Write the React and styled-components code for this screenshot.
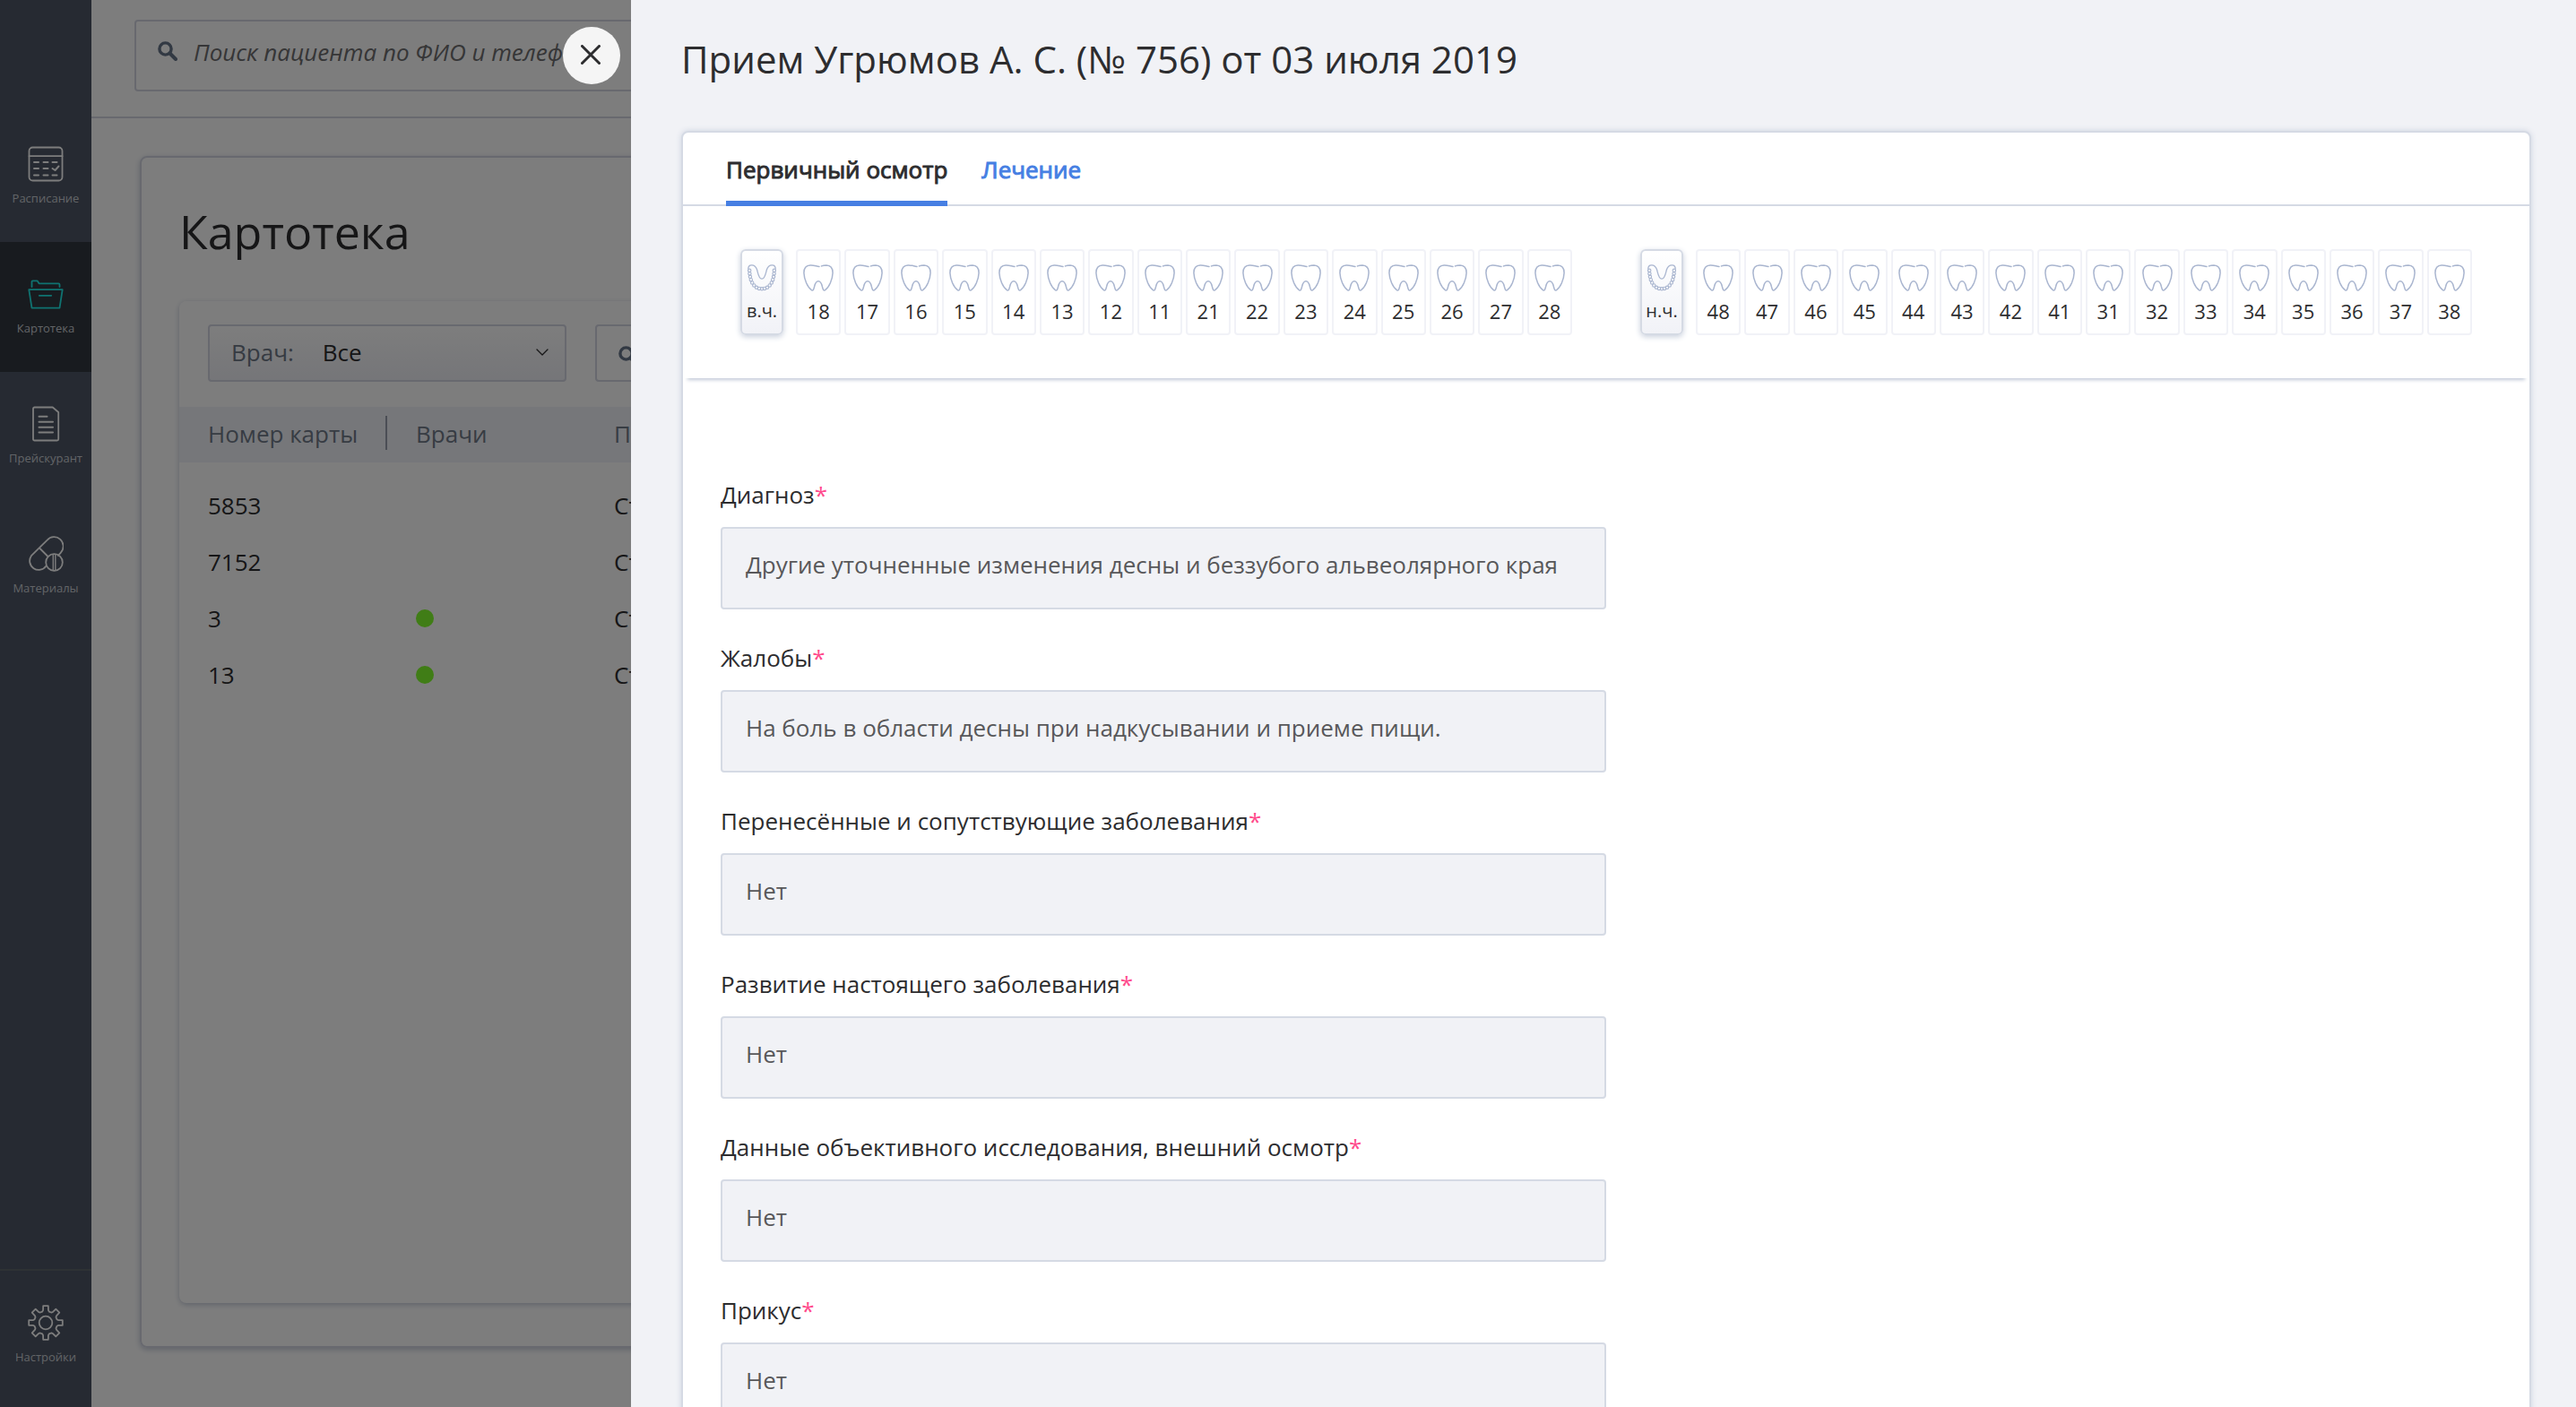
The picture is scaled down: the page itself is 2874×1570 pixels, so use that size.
import React from "react";
import styled, { createGlobalStyle, css } from "styled-components";

const GlobalStyle = createGlobalStyle`
  *, *::before, *::after { box-sizing: border-box; }
  body {
    margin: 0;
    height: 100vh;
    overflow: hidden;
    background: #fff;
    color: #2d2d2f;
    font-family: "Open Sans", "Noto Sans", sans-serif;
    font-size: 26px;
    font-weight: 380;
    line-height: 36px;
  }
  button, input, select, textarea { font: inherit; color: inherit; margin: 0; }
  h1, h2 { margin: 0; font-weight: inherit; }
`;

/* ---------- page behind the drawer ---------- */

const Page = styled.div`
  display: flex;
  height: 100vh;
`;

const Sidebar = styled.nav`
  display: flex;
  flex-direction: column;
  width: 102px;
  flex: none;
  padding-top: 125px;
  background: #4e5666;
`;

const NavItem = styled.a`
  display: flex;
  flex-direction: column;
  align-items: center;
  height: 145px;
  padding-top: 38px;
  color: #fff;
  text-decoration: none;
  background: ${(p) => (p.$active ? "#31373f" : "transparent")};

  svg { color: ${(p) => (p.$active ? "#1feae6" : "#fff")}; }
`;

const SettingsItem = styled(NavItem)`
  height: 154px;
  margin-top: auto;
  border-top: 2px solid #5e666b;
`;

const NavLabel = styled.span`
  margin-top: 8px;
  font-size: 13px;
  line-height: 20px;
  color: #c8ccd2;
`;

const Main = styled.main`
  flex: 1;
  min-width: 0;
  display: flex;
  flex-direction: column;
`;

const TopBar = styled.header`
  padding: 22px 48px 28px;
  border-bottom: 2px solid #d4d6e2;
`;

const SearchBox = styled.label`
  display: flex;
  align-items: center;
  height: ${(p) => (p.$compact ? "64px" : "80px")};
  flex: 1;
  padding: 0 24px;
  gap: 18px;
  border: 2px solid #d4d6e2;
  border-radius: 4px;
  color: #66758a;

  svg { flex: none; margin: ${(p) => (p.$compact ? "6px 0 0" : "0 0 10px")}; }
  input {
    flex: 1;
    min-width: 0;
    height: 36px;
    margin-bottom: 8px;
    padding: 0;
    border: 0;
    outline: 0;
    background: transparent;
    font-style: italic;
  }
  input::placeholder { color: #6e6e70; opacity: 1; }
`;

const Card = styled.section`
  flex: 1;
  display: flex;
  flex-direction: column;
  margin: 42px 48px 66px 54px;
  padding: 46px 42px 48px;
  border: 2px solid #d4d7e2;
  border-radius: 8px;
  box-shadow: 0 2px 6px #c4cad8;
`;

const CardTitle = styled.h1`
  font-size: 52px;
  line-height: 72px;
`;

const Registry = styled.div`
  flex: 1;
  margin-top: 42px;
  border-radius: 8px;
  box-shadow: 0 2px 6px #c4cad8;
`;

const Filters = styled.div`
  display: flex;
  gap: 32px;
  padding: 26px 32px 28px;
`;

const DoctorFilter = styled.div`
  display: flex;
  align-items: center;
  width: 400px;
  height: 64px;
  padding: 0 18px 2px 24px;
  border: 2px solid #d4d6e2;
  border-radius: 4px;
  background: linear-gradient(#fff, #eff0f6);

  label { color: #6f7887; margin-right: 32px; }
  select {
    flex: 1;
    padding: 0;
    border: 0;
    outline: 0;
    background: transparent;
    appearance: none;
  }
`;

const Table = styled.table`
  width: 100%;
  table-layout: fixed;
  border-collapse: collapse;
  text-align: left;

  th, td { padding: 0 0 2px 32px; white-space: nowrap; font-weight: inherit; }
  th { height: 62px; background-color: #f0f3f8; color: #707a8a; }
  th:first-child {
    background-image: linear-gradient(#9aa0ae, #9aa0ae);
    background-repeat: no-repeat;
    background-position: right 10px;
    background-size: 2px 38px;
  }
  td { height: 63px; }
  tbody::before { content: ""; display: block; height: 17px; }
`;

const Col = styled.col`
  width: ${(p) => p.$width};
`;

const Dot = styled.span`
  display: block;
  width: 20px;
  height: 20px;
  border-radius: 50%;
  background: #84ff2e;
`;

/* ---------- drawer ---------- */

const Backdrop = styled.div`
  position: fixed;
  inset: 0;
  display: flex;
  background: rgba(0, 0, 0, 0.51);
`;

const CloseSlot = styled.div`
  flex: none;
  width: 704px;
  display: flex;
  justify-content: flex-end;
  align-items: flex-start;
  padding: 30px 12px;
`;

const CloseButton = styled.button`
  display: flex;
  align-items: center;
  justify-content: center;
  width: 64px;
  height: 64px;
  padding: 0;
  border: 0;
  border-radius: 50%;
  background: #f5f5f5;
`;

const Drawer = styled.aside`
  flex: 1;
  min-width: 0;
  overflow: hidden;
  padding: 38px 50px 0 56px;
  background: #f1f2f6;
`;

const DrawerTitle = styled.h2`
  font-size: 42px;
  line-height: 56px;
`;

const Visit = styled.section`
  margin-top: 52px;
  border: 2px solid #d5dae4;
  border-radius: 8px;
  background: #fff;
  box-shadow: 0 0 6px #ccd3e0;
`;

const Tabs = styled.div`
  display: flex;
  gap: 38px;
  padding: 0 48px;
  border-bottom: 2px solid #d5dae4;
`;

const Tab = styled.button`
  margin-bottom: -2px;
  padding: 23px 0 17px;
  border: 0;
  border-bottom: 6px solid transparent;
  background: none;
  -webkit-text-stroke: 1px currentColor;
  color: #467fe3;
  ${(p) =>
    p.$active &&
    css`
      color: #2d2d2f;
      border-color: #467fe3;
    `}
`;

const Jaws = styled.div`
  display: grid;
  grid-template-columns: 1fr 1fr;
  gap: 76px;
  margin: 0 2px;
  padding: 48px 62px;
  box-shadow: 0 5px 4px -3px #c3cad8;
`;

const Jaw = styled.div`
  display: flex;
  gap: 14px;
`;

const Teeth = styled.div`
  flex: 1;
  display: grid;
  grid-template-columns: repeat(16, 1fr);
  gap: 4px;
`;

const toothCell = css`
  display: flex;
  flex-direction: column;
  align-items: center;
  gap: 6px;
  min-width: 0;
  height: 96px;
  padding: 15px 0 0;
  line-height: 32px;

  svg { flex: none; color: #a9b5cf; }
`;

const ToothButton = styled.button`
  ${toothCell}
  font-size: 22px;
  border: 2px solid #f1f2f7;
  border-radius: 4px;
  background: #fff;
`;

const JawButton = styled.button`
  ${toothCell}
  width: 48px;
  font-size: 20px;
  border: 2px solid #d5dae4;
  border-radius: 6px;
  background: linear-gradient(#fff, #f1f2f7);
  box-shadow: 0 2px 6px #c9d0dd;
`;

const Form = styled.form`
  display: flex;
  flex-direction: column;
  gap: 36px;
  padding: 112px 42px 48px;
`;

const Field = styled.div`
  display: flex;
  flex-direction: column;
  gap: 18px;
  width: 50%;
`;

const Required = styled.span`
  color: #ff4b8c;
`;

const Answer = styled.textarea`
  display: block;
  width: 100%;
  height: 92px;
  padding: 22px 26px;
  border: 2px solid #d5dae4;
  border-radius: 4px;
  outline: 0;
  resize: none;
  overflow: hidden;
  background: #f1f2f6;
  color: #58585a;
`;

/* ---------- drawings ---------- */

const stroke = {
  fill: "none",
  stroke: "currentColor",
  strokeLinecap: "round",
  strokeLinejoin: "round",
};

const ScheduleIcon = () => (
  <svg width="40" height="40" viewBox="0 0 40 40" {...stroke} strokeWidth="1.8">
    <rect x="1.5" y="1.5" width="37" height="37" rx="4" />
    <path d="M1.5 11.2h37" />
    <path d="M7 18h5M17.500 18h5M27.500 18h5M7 25h5M17.500 25h5M7 32.500h5M17.500 32.500h5M27.500 32.500h5" strokeWidth="2" />
    <path d="M27.500 25l3 2 4-4.500" strokeWidth="2" />
  </svg>
);

const FolderIcon = () => (
  <svg width="40" height="40" viewBox="0 0 40 40" {...stroke} strokeWidth="1.8">
    <path d="M4.500 12V6.300c0-.7.400-1 1-1h4.600c.5 0 .8.200 1 .7L12.500 8.300h21.700c.8 0 1.300.5 1.300 1.200V12" />
    <path d="M1.300 15.200h37.400L35.500 35.600H4.500z" />
    <path d="M12.800 21.800h13.400" />
  </svg>
);

const PriceIcon = () => (
  <svg width="40" height="40" viewBox="0 0 40 40" {...stroke} strokeWidth="1.8">
    <path d="M7.500 1.500h20.300L34.200 7v30a1.500 1.500 0 0 1-1.500 1.500H7.500A1.500 1.500 0 0 1 6 37V3a1.500 1.500 0 0 1 1.500-1.500z" />
    <path d="M12.500 11.800h9M12.500 17.800h15.500M12.500 23.800h15.500M12.500 29.600h15.500" strokeWidth="2" />
  </svg>
);

const PillsIcon = () => (
  <svg width="40" height="40" viewBox="0 0 40 40" {...stroke} strokeWidth="1.8">
    <path d="M20.500 33.500a10 10 0 0 1-16.600-11.300L21.700 4.600A10 10 0 0 1 37 18.400c-.6.900-1.900 2.200-3.200 3.400" />
    <path d="M13.500 14l9 9" />
    <circle cx="29.500" cy="29.500" r="9.300" />
    <path d="M28.300 20.500v18M30.800 20.500v18" strokeWidth="1.400" />
  </svg>
);

const gearPath = Array.from({ length: 8 }, (_, i) => {
  const at = (deg, r) => {
    const a = ((i * 45 + deg - 90) * Math.PI) / 180;
    return `${(20 + r * Math.cos(a)).toFixed(2)} ${(20 + r * Math.sin(a)).toFixed(2)}`;
  };
  return `${i ? "L" : "M"}${at(-17, 13)}L${at(-12, 14.2)}L${at(-8.5, 19)}L${at(8.5, 19)}L${at(12, 14.2)}L${at(17, 13)}`;
}).join("") + "Z";

const GearIcon = () => (
  <svg width="40" height="40" viewBox="0 0 40 40" {...stroke} strokeWidth="1.8">
    <path d={gearPath} />
    <circle cx="20" cy="20" r="7.300" />
  </svg>
);

const SearchIcon = () => (
  <svg width="22" height="22" viewBox="0 0 22 22" {...stroke} strokeWidth="3.400">
    <circle cx="8.500" cy="8.500" r="6.600" />
    <path d="M13.500 13.500l6.500 6.500" strokeWidth="4" />
  </svg>
);

const ChevronIcon = () => (
  <svg width="14" height="10" viewBox="0 0 14 10" {...stroke} strokeWidth="1.300">
    <path d="M1 2l6 6 6-6" />
  </svg>
);

const CrossIcon = () => (
  <svg width="24" height="24" viewBox="0 0 24 24" {...stroke} strokeWidth="3">
    <path d="M1.500 1.500l19 19M20.500 1.500l-19 19" />
  </svg>
);

const ToothIcon = () => (
  <svg width="34" height="30" viewBox="0 0 34 30" {...stroke} strokeWidth="1.500">
    <path d="M18 2.400C14 1.800 12 .8 8 1 2.500 1.200.9 4.500.9 9.500 1.200 17 5 25.500 9.400 28.600c2.200 1.400 2.600-1.600 3.200-3.800.8-3.300 2-6 4.400-6s3.600 2.700 4.400 6c.6 2.200 1 5.200 3.200 3.800C29 25.500 32.800 17 33.100 9.500 33.100 4.500 31.500 1.200 26 1c-2.500 0-4 .3-5.500.9" />
  </svg>
);

const beads = [
  [2.2, 6.8], [2.4, 10.3], [2.9, 13.8], [3.8, 17.2], [5.2, 20.500], [7.300, 23.500], [10, 25.800], [13, 27],
];

const JawIcon = () => (
  <svg width="32" height="30" viewBox="0 0 32 30" {...stroke} strokeWidth="1.300">
    <path d="M.8 5C.8 1.600 2.200.9 4.500.8 8 .7 9.600 2.600 10.600 6 11.800 10.500 12.600 16.200 16 16.200s4.200-5.700 5.400-10.200C22.400 2.600 24 .7 27.500.8c2.300.1 3.700.8 3.700 4.200" />
    {beads.map(([x, y]) => (
      <g key={y} strokeWidth="1.100">
        <circle cx={x} cy={y} r="1.700" />
        <circle cx={32 - x} cy={y} r="1.700" />
      </g>
    ))}
    <circle cx="16" cy="27.300" r="1.700" strokeWidth="1.100" />
  </svg>
);

/* ---------- data ---------- */

const nav = [
  { label: "Расписание", Icon: ScheduleIcon },
  { label: "Картотека", Icon: FolderIcon, active: true },
  { label: "Прейскурант", Icon: PriceIcon },
  { label: "Материалы", Icon: PillsIcon },
];

const patients = [
  { card: "5853" },
  { card: "7152" },
  { card: "3", doctor: true },
  { card: "13", doctor: true },
];

const jaws = [
  { name: "в.ч.", teeth: [18, 17, 16, 15, 14, 13, 12, 11, 21, 22, 23, 24, 25, 26, 27, 28] },
  { name: "н.ч.", teeth: [48, 47, 46, 45, 44, 43, 42, 41, 31, 32, 33, 34, 35, 36, 37, 38] },
];

const fields = [
  ["Диагноз", "Другие уточненные изменения десны и беззубого альвеолярного края"],
  ["Жалобы", "На боль в области десны при надкусывании и приеме пищи."],
  ["Перенесённые и сопутствующие заболевания", "Нет"],
  ["Развитие настоящего заболевания", "Нет"],
  ["Данные объективного исследования, внешний осмотр", "Нет"],
  ["Прикус", "Нет"],
];

export default function App() {
  return (
    <>
      <GlobalStyle />
      <Page>
        <Sidebar>
          {nav.map(({ label, Icon, active }) => (
            <NavItem key={label} href="#" $active={active}>
              <Icon />
              <NavLabel>{label}</NavLabel>
            </NavItem>
          ))}
          <SettingsItem href="#">
            <GearIcon />
            <NavLabel>Настройки</NavLabel>
          </SettingsItem>
        </Sidebar>
        <Main>
          <TopBar>
            <SearchBox>
              <SearchIcon />
              <input type="text" placeholder="Поиск пациента по ФИО и телефону" />
            </SearchBox>
          </TopBar>
          <Card>
            <CardTitle>Картотека</CardTitle>
            <Registry>
              <Filters>
                <DoctorFilter>
                  <label htmlFor="doctor">Врач:</label>
                  <select id="doctor">
                    <option>Все</option>
                  </select>
                  <ChevronIcon />
                </DoctorFilter>
                <SearchBox $compact>
                  <SearchIcon />
                  <input type="text" />
                </SearchBox>
              </Filters>
              <Table>
                <colgroup>
                  <Col $width="232px" />
                  <Col $width="221px" />
                  <Col $width="auto" />
                </colgroup>
                <thead>
                  <tr>
                    <th>Номер карты</th>
                    <th>Врачи</th>
                    <th>П</th>
                  </tr>
                </thead>
                <tbody>
                  {patients.map(({ card, doctor }) => (
                    <tr key={card}>
                      <td>{card}</td>
                      <td>{doctor && <Dot />}</td>
                      <td>Ст</td>
                    </tr>
                  ))}
                </tbody>
              </Table>
            </Registry>
          </Card>
        </Main>
      </Page>
      <Backdrop>
        <CloseSlot>
          <CloseButton type="button" aria-label="Закрыть">
            <CrossIcon />
          </CloseButton>
        </CloseSlot>
        <Drawer>
          <DrawerTitle>Прием Угрюмов А. С. (№ 756) от 03 июля 2019</DrawerTitle>
          <Visit>
            <Tabs role="tablist">
              <Tab type="button" role="tab" aria-selected="true" $active>
                Первичный осмотр
              </Tab>
              <Tab type="button" role="tab" aria-selected="false">
                Лечение
              </Tab>
            </Tabs>
            <Jaws>
              {jaws.map(({ name, teeth }) => (
                <Jaw key={name}>
                  <JawButton type="button">
                    <JawIcon />
                    {name}
                  </JawButton>
                  <Teeth>
                    {teeth.map((n) => (
                      <ToothButton type="button" key={n}>
                        <ToothIcon />
                        {n}
                      </ToothButton>
                    ))}
                  </Teeth>
                </Jaw>
              ))}
            </Jaws>
            <Form>
              {fields.map(([label, value], i) => (
                <Field key={label}>
                  <label htmlFor={`field-${i}`}>
                    {label}
                    <Required>*</Required>
                  </label>
                  <Answer id={`field-${i}`} readOnly defaultValue={value} />
                </Field>
              ))}
            </Form>
          </Visit>
        </Drawer>
      </Backdrop>
    </>
  );
}
